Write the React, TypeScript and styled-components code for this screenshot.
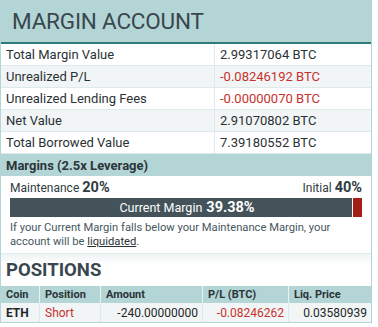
import React from 'react';
import styled, { createGlobalStyle } from 'styled-components';

const GlobalStyle = createGlobalStyle`
  body {
    margin: 0;
    background: #ffffff;
    font-family: Roboto, "Liberation Sans", sans-serif;
    color: #2f3b40;
  }
`;

const TEAL = '#b3d5d6';
const RED = '#c9302c';

const summary = [
  { label: 'Total Margin Value', value: '2.99317064 BTC' },
  { label: 'Unrealized P/L', value: '-0.08246192 BTC', neg: true },
  { label: 'Unrealized Lending Fees', value: '-0.00000070 BTC', neg: true },
  { label: 'Net Value', value: '2.91070802 BTC' },
  { label: 'Total Borrowed Value', value: '7.39180552 BTC' },
];

const Panel = styled.div`
  width: 370px;
  border-left: 1px solid ${TEAL};
  border-right: 1px solid ${TEAL};
  border-bottom: 1px solid ${TEAL};
`;

const Header = styled.div`
  height: 42px;
  background: ${TEAL};
  border-bottom: 2px solid #2d7b78;
  display: flex;
  align-items: center;
  padding-left: 11px;
  font-size: 22.5px;
  color: #3a474e;
  letter-spacing: -0.2px;
`;

const SummaryTable = styled.div`
  display: grid;
  grid-template-columns: 213px 1fr;
`;

const Cell = styled.div<{ $alt?: boolean; $neg?: boolean; $left?: boolean }>`
  height: 21px;
  display: flex;
  align-items: center;
  padding-left: 5px;
  font-size: 13px;
  color: ${p => (p.$neg ? RED : '#2b3236')};
  background: ${p => (p.$alt ? '#f1f5f5' : '#ffffff')};
  border-bottom: 1px solid #dde9ea;
  border-left: ${p => (p.$left ? 'none' : '1px solid #dde9ea')};
`;

const SubHeader = styled.div`
  height: 22px;
  background: ${TEAL};
  display: flex;
  align-items: center;
  padding-left: 5px;
  font-size: 13px;
  font-weight: 700;
  color: #2b3438;
`;

const MarginBody = styled.div`
  padding: 4px 9px 4px 9px;
`;

const Limits = styled.div`
  display: flex;
  justify-content: space-between;
  align-items: flex-end;
  font-size: 12px;
  color: #2f3b40;
  height: 16px;
  line-height: 16px;
  b {
    font-size: 14.5px;
    font-weight: 700;
  }
`;

const Bar = styled.div`
  display: flex;
  height: 19px;
  margin-top: 2px;
  gap: 1px;
`;

const BarFill = styled.div`
  flex: 1;
  background: #435359;
  color: #ffffff;
  display: flex;
  align-items: baseline;
  justify-content: center;
  padding-left: 12px;
  font-size: 12.5px;
  line-height: 19px;
  b {
    font-size: 14.5px;
    font-weight: 700;
    margin-left: 4px;
  }
`;

const BarRest = styled.div`
  width: 9px;
  background: #a51d17;
`;

const Note = styled.p`
  margin: 4px 0 0 0;
  font-size: 11.2px;
  line-height: 14px;
  color: #46575e;
  span {
    color: #2b3236;
    text-decoration: underline;
  }
`;

const PositionsTitle = styled.div`
  height: 31px;
  display: flex;
  align-items: center;
  padding-left: 5px;
  font-size: 18.5px;
  font-weight: 700;
  color: #3a474e;
  background: linear-gradient(#eef3f3, #ffffff 35%);
  border-top: 1px solid #e3ecec;
`;

const PosTable = styled.div`
  display: grid;
  grid-template-columns: 38px 61px 102px 86px 1fr;
  margin-top: 1px;
`;

const HeadCell = styled.div`
  height: 17px;
  background: ${TEAL};
  font-size: 11px;
  font-weight: 700;
  color: #2b3438;
  display: flex;
  align-items: center;
  padding-left: 5px;
  border-left: 1px solid #eaf2f2;
  &:first-child {
    border-left: none;
  }
`;

const BodyCell = styled.div<{ $right?: boolean; $neg?: boolean; $bold?: boolean; $first?: boolean }>`
  height: 19px;
  background: #f1f5f5;
  font-size: 12px;
  font-weight: ${p => (p.$bold ? 700 : 400)};
  color: ${p => (p.$neg ? RED : '#1f2629')};
  display: flex;
  align-items: center;
  justify-content: ${p => (p.$right ? 'flex-end' : 'flex-start')};
  padding: 0 4px 0 5px;
  border-left: ${p => (p.$first ? 'none' : '1px solid #dde9ea')};
`;

export default function App() {
  return (
    <>
      <GlobalStyle />
      <Panel>
        <Header>MARGIN ACCOUNT</Header>
        <SummaryTable>
          {summary.map((row, i) => (
            <React.Fragment key={row.label}>
              <Cell $left $alt={i % 2 === 1}>{row.label}</Cell>
              <Cell $alt={i % 2 === 1} $neg={row.neg}>{row.value}</Cell>
            </React.Fragment>
          ))}
        </SummaryTable>
        <SubHeader>Margins (2.5x Leverage)</SubHeader>
        <MarginBody>
          <Limits>
            <span>Maintenance <b>20%</b></span>
            <span>Initial <b>40%</b></span>
          </Limits>
          <Bar>
            <BarFill>Current Margin <b>39.38%</b></BarFill>
            <BarRest />
          </Bar>
          <Note>
            If your Current Margin falls below your Maintenance Margin, your account will be <span>liquidated</span>.
          </Note>
        </MarginBody>
        <PositionsTitle>POSITIONS</PositionsTitle>
        <PosTable>
          <HeadCell>Coin</HeadCell>
          <HeadCell>Position</HeadCell>
          <HeadCell>Amount</HeadCell>
          <HeadCell>P/L (BTC)</HeadCell>
          <HeadCell>Liq. Price</HeadCell>
          <BodyCell $first $bold>ETH</BodyCell>
          <BodyCell $neg>Short</BodyCell>
          <BodyCell $right>-240.00000000</BodyCell>
          <BodyCell $right $neg>-0.08246262</BodyCell>
          <BodyCell $right>0.03580939</BodyCell>
        </PosTable>
      </Panel>
    </>
  );
}
